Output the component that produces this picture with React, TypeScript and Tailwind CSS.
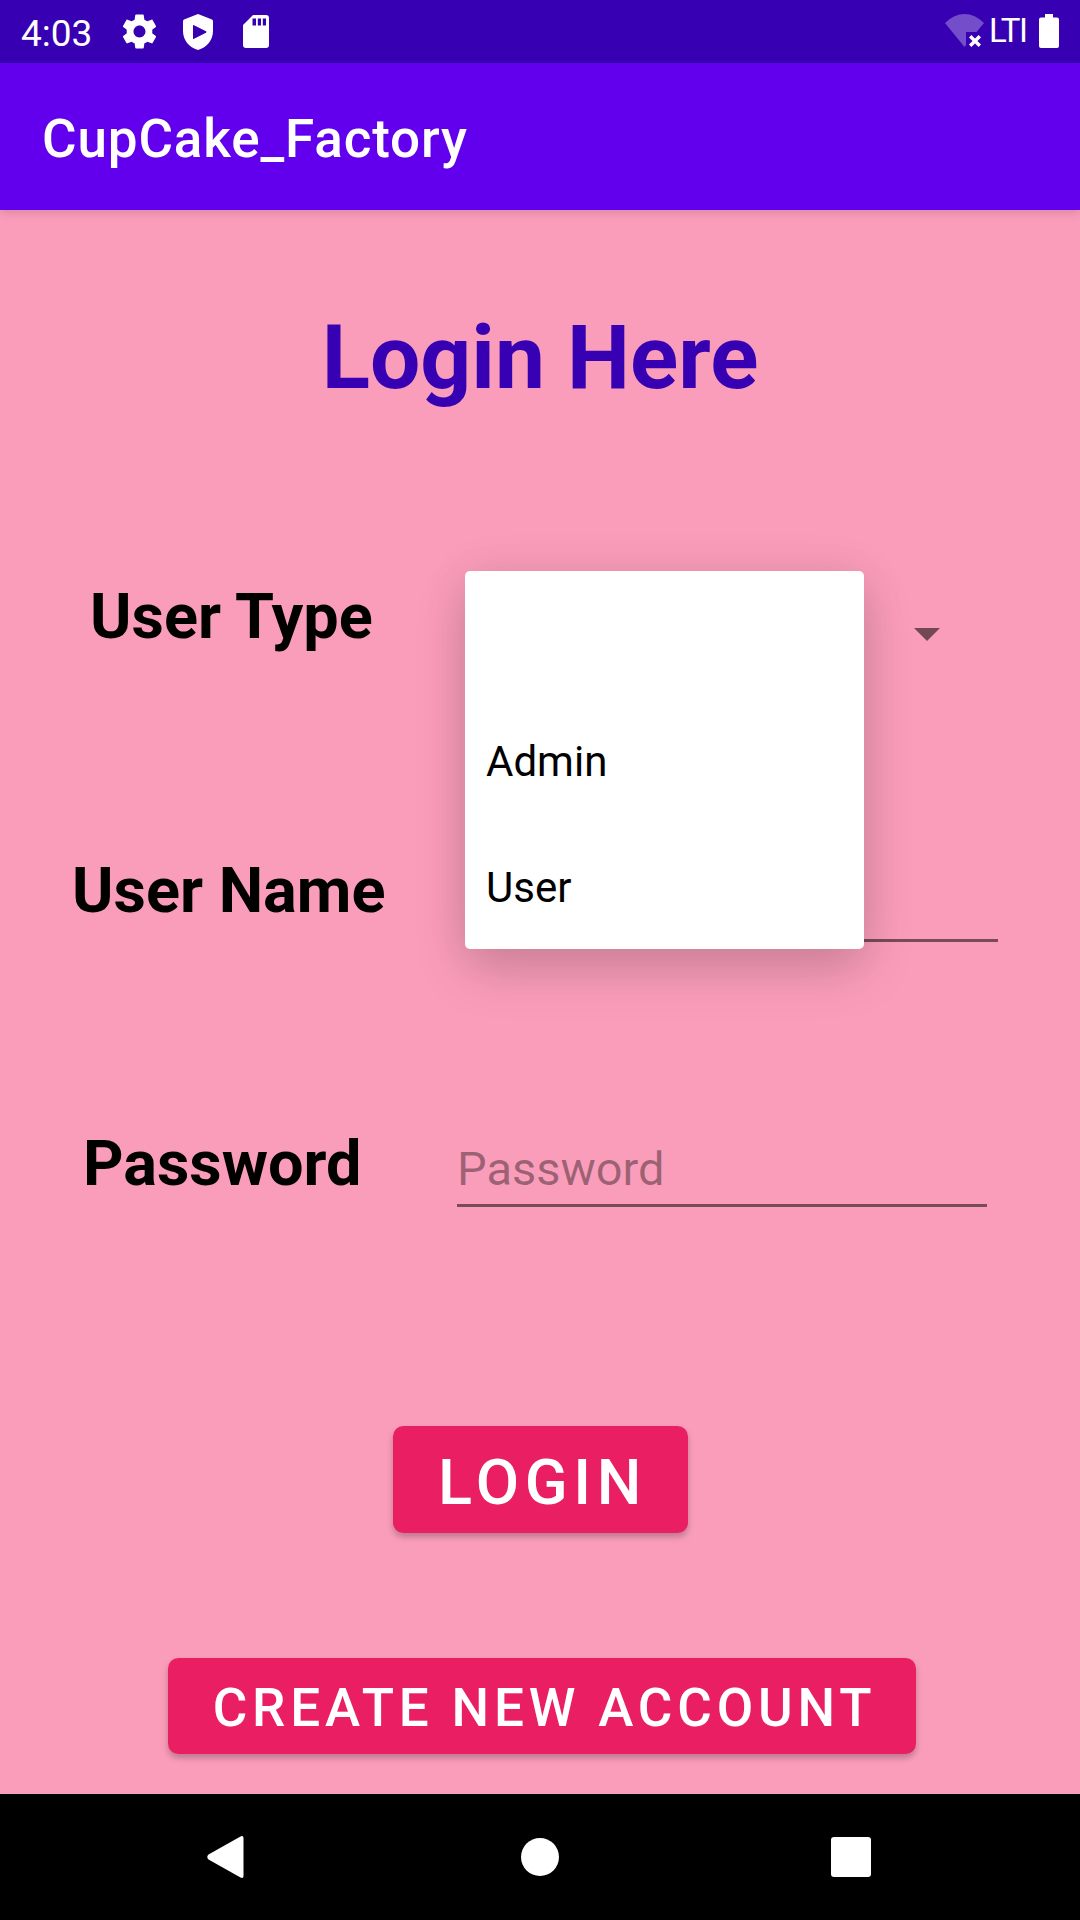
import type { ReactNode } from "react";

function StatusBar() {
  return (
    <header className="flex h-[63px] items-start bg-[#3700b3] text-white">
      <span className="ml-[21px] mt-[12px] w-[103px] text-[37px] leading-[43px]">4:03</span>
      <svg className="mt-[11px] h-[41px] w-[41px] -ml-[5px]" viewBox="0 0 24 24" fill="currentColor">
        <path d="M19.43 12.98c.04-.32.07-.64.07-.98s-.03-.66-.07-.98l2.11-1.65c.19-.15.24-.42.12-.64l-2-3.46c-.12-.22-.39-.3-.61-.22l-2.49 1c-.52-.4-1.08-.73-1.69-.98l-.38-2.65C14.46 2.18 14.25 2 14 2h-4c-.25 0-.46.18-.49.42l-.38 2.65c-.61.25-1.17.59-1.69.98l-2.49-1c-.23-.09-.49 0-.61.22l-2 3.46c-.13.22-.07.49.12.64l2.11 1.65c-.04.32-.07.65-.07.98s.03.66.07.98l-2.11 1.65c-.19.15-.24.42-.12.64l2 3.46c.12.22.39.3.61.22l2.49-1c.52.4 1.08.73 1.69.98l.38 2.65c.03.24.24.42.49.42h4c.25 0 .46-.18.49-.42l.38-2.65c.61-.25 1.17-.59 1.69-.98l2.49 1c.23.09.49 0 .61-.22l2-3.46c.12-.22.07-.49-.12-.64l-2.11-1.65zM12 15.5c-1.93 0-3.5-1.57-3.5-3.5s1.57-3.5 3.5-3.5 3.5 1.57 3.5 3.5-1.57 3.5-3.5 3.5z" />
      </svg>
      <svg className="ml-[23px] mt-[13.5px] h-[36px] w-[30px]" viewBox="0 0 30 36" fill="currentColor">
        <path fillRule="evenodd" d="M15 0 29 5.5Q30 6 30 7V17C30 26 24 33.500 15 36 6 33.500 0 26 0 17V7Q0 6 1 5.500ZM11 11.200Q10 10.600 10 11.800V24.200Q10 25.400 11 24.800L23 18.800Q24 18 23 17.200Z" />
      </svg>
      <svg className="ml-[30px] mt-[15px] h-[33px] w-[26px]" viewBox="0 0 26 33" fill="currentColor">
        <path fillRule="evenodd" d="M10 0H23Q26 0 26 3V30Q26 33 23 33H3Q0 33 0 30V10ZM9.500 3.500V10.500H13V3.500ZM14.800 3.500V10.500H18V3.500ZM19.800 3.500V10.500H23V3.500Z" />
      </svg>
      <div className="ml-auto flex items-start">
        <svg className="mt-[14px] h-[33px] w-[39px]" viewBox="0 0 39 33">
          <path fill="#fff" fillOpacity=".3" d="M0 9Q9 0 19.500 0T39 9L31.500 18H21V31L19.500 33Z" />
          <path stroke="#fff" strokeWidth="3.400" d="m25.200 22.200 9.600 9.600m0-9.600-9.600 9.600" />
        </svg>
        <span className="ml-[5px] mt-[8px] w-[50px] text-[33px] font-normal leading-[46px] tracking-[-1.5px]">LTI</span>
        <svg className="mr-[21px] mt-[14px] h-[34px] w-[20px]" viewBox="0 0 20 34" fill="currentColor">
          <path d="M6 0H14V3.500H18Q20 3.500 20 5.500V32Q20 34 18 34H2Q0 34 0 32V5.500Q0 3.500 2 3.500H6Z" />
        </svg>
      </div>
    </header>
  );
}

function FieldRow({ label, labelClass, className, children }: { label: string; labelClass: string; className: string; children: ReactNode }) {
  return (
    <div className={`flex h-[88px] w-full items-start ${className}`}>
      <label className={`whitespace-nowrap text-[63px] font-bold leading-[74px] text-black ${labelClass}`}>{label}</label>
      {children}
    </div>
  );
}

const OPTIONS = ["", "Admin", "User"];

function Spinner() {
  return (
    <div className="relative flex h-[88px] w-[522px] items-start">
      <svg className="ml-[449px] mt-[48px] h-[13px] w-[26px]" viewBox="0 0 26 13">
        <path fill="#000" fillOpacity=".54" d="M0 0H26L13 13Z" />
      </svg>
      <ul className="absolute left-0 top-[-9px] z-10 w-[399px] rounded-[5px] bg-white shadow-[0_22px_52px_rgba(0,0,0,0.16),0_0_48px_rgba(0,0,0,0.07)]">
        {OPTIONS.map((option) => (
          <li key={option} className="flex h-[126px] items-center pl-[21px] pt-[2px] text-[42px] leading-[49px] text-black">
            {option}
          </li>
        ))}
      </ul>
    </div>
  );
}

export default function App() {
  return (
    <div className="flex h-[1920px] w-[1080px] flex-col overflow-hidden bg-[#fa9dbb] font-['Roboto',sans-serif]">
      <StatusBar />
      <div className="z-10 flex h-[147px] items-center bg-[#6200ee] pl-[42px] pt-[7px] text-[53px] font-medium tracking-[0.016em] text-white shadow-[0_3px_9px_rgba(0,0,0,0.13)]">
        CupCake_Factory
      </div>
      <main className="flex h-[1584px] flex-col items-start">
        <h1 className="mt-[95px] self-center text-[89.25px] font-bold leading-[105px] text-[#3700b3]">Login Here</h1>
        <FieldRow label="User Type" labelClass="ml-[90px] w-[375px]" className="mt-[170px]">
          <Spinner />
        </FieldRow>
        <FieldRow label="User Name" labelClass="ml-[72px] w-[396px]" className="mt-[186px]">
          <div className="h-[88px] w-[530px] border-b-3 border-black/52" />
        </FieldRow>
        <FieldRow label="Password" labelClass="ml-[83px] w-[374px]" className="mt-[185px]">
          <div className="h-[80px] w-[530px] border-b-3 border-black/52 pt-[14px] text-[47px] leading-[56px] text-black/38">Password</div>
        </FieldRow>
        <button className="ml-[393px] mt-[211px] flex h-[107px] w-[295px] items-center justify-center rounded-[10.5px] bg-[#e91e63] pl-[4px] pt-[7px] text-[63px] font-medium tracking-[0.0893em] text-white shadow-[0_4px_6px_rgba(0,0,0,0.24)]">
          LOGIN
        </button>
        <button className="ml-[168px] mt-[125px] flex h-[96px] w-[748px] items-center justify-center whitespace-nowrap rounded-[10.5px] bg-[#e91e63] pl-[5px] pt-[5px] text-[53px] font-medium tracking-[0.091em] text-white shadow-[0_4px_6px_rgba(0,0,0,0.24)]">
          CREATE NEW ACCOUNT
        </button>
      </main>
      <nav className="flex h-[126px] items-center bg-black pl-[207px]">
        <svg className="h-[42px] w-[37px]" viewBox="0 0 37 42" fill="#fff">
          <path d="M33.500.4Q36.500-.8 36.500 2V40Q36.500 42.800 33.500 41.600L1.500 23.500Q-1 21 1.500 18.500Z" />
        </svg>
        <div className="ml-[277px] h-[38px] w-[38px] rounded-full bg-white" />
        <div className="ml-[272px] h-[40px] w-[40px] rounded-[3px] bg-white" />
      </nav>
    </div>
  );
}
